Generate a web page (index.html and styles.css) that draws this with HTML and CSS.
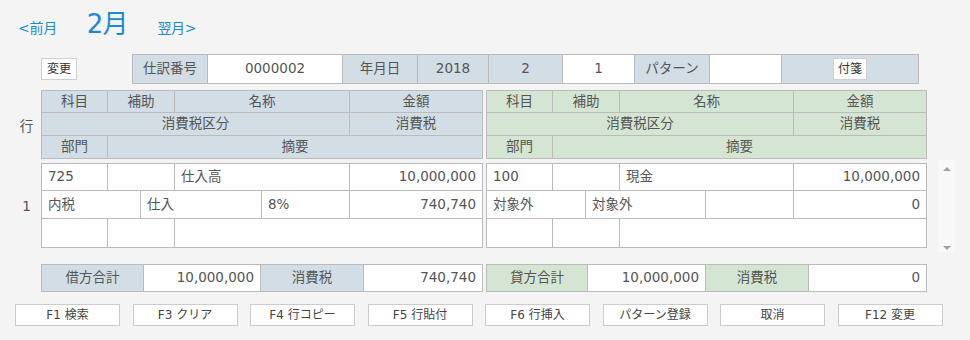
FILE: index.html
```html
<!DOCTYPE html>
<html lang="ja">
<head>
<meta charset="utf-8">
<title>仕訳入力</title>
<link rel="stylesheet" href="styles.css">
</head>
<body>
<div class="page">
  <div class="nav">
    <a class="nav-link prev">&lt;前月</a>
    <span class="month">2月</span>
    <a class="nav-link next">翌月&gt;</a>
  </div>

  <div class="topbar">
    <button class="mini-btn change">変更</button>
    <div class="info grid-bg">
      <div class="c lbl">仕訳番号</div>
      <div class="c wht">0000002</div>
      <div class="c lbl">年月日</div>
      <div class="c lbl">2018</div>
      <div class="c lbl">2</div>
      <div class="c wht">1</div>
      <div class="c lbl">パターン</div>
      <div class="c wht"></div>
      <div class="c lbl"><button class="mini-btn">付箋</button></div>
    </div>
  </div>

  <div class="section head-sec">
    <div class="rowlabel">行</div>
    <div class="tbl head left grid-bg">
      <div class="c h" style="grid-area:1/1/2/2">科目</div>
      <div class="c h" style="grid-area:1/2/2/4">補助</div>
      <div class="c h" style="grid-area:1/4/2/6">名称</div>
      <div class="c h" style="grid-area:1/6/2/7">金額</div>
      <div class="c h" style="grid-area:2/1/3/6">消費税区分</div>
      <div class="c h" style="grid-area:2/6/3/7">消費税</div>
      <div class="c h" style="grid-area:3/1/4/2">部門</div>
      <div class="c h" style="grid-area:3/2/4/7">摘要</div>
    </div>
    <div class="tbl head right grid-bg">
      <div class="c h" style="grid-area:1/1/2/2">科目</div>
      <div class="c h" style="grid-area:1/2/2/4">補助</div>
      <div class="c h" style="grid-area:1/4/2/6">名称</div>
      <div class="c h" style="grid-area:1/6/2/7">金額</div>
      <div class="c h" style="grid-area:2/1/3/6">消費税区分</div>
      <div class="c h" style="grid-area:2/6/3/7">消費税</div>
      <div class="c h" style="grid-area:3/1/4/2">部門</div>
      <div class="c h" style="grid-area:3/2/4/7">摘要</div>
    </div>
  </div>

  <div class="section data-sec">
    <div class="rowlabel">1</div>
    <div class="tbl data left grid-bg">
      <div class="c d" style="grid-area:1/1/2/2">725</div>
      <div class="c d" style="grid-area:1/2/2/4"></div>
      <div class="c d" style="grid-area:1/4/2/6">仕入高</div>
      <div class="c d num" style="grid-area:1/6/2/7">10,000,000</div>
      <div class="c d" style="grid-area:2/1/3/3">内税</div>
      <div class="c d" style="grid-area:2/3/3/5">仕入</div>
      <div class="c d" style="grid-area:2/5/3/6">8%</div>
      <div class="c d num" style="grid-area:2/6/3/7">740,740</div>
      <div class="c d" style="grid-area:3/1/4/2"></div>
      <div class="c d" style="grid-area:3/2/4/4"></div>
      <div class="c d" style="grid-area:3/4/4/7"></div>
    </div>
    <div class="tbl data right grid-bg">
      <div class="c d" style="grid-area:1/1/2/2">100</div>
      <div class="c d" style="grid-area:1/2/2/4"></div>
      <div class="c d" style="grid-area:1/4/2/6">現金</div>
      <div class="c d num" style="grid-area:1/6/2/7">10,000,000</div>
      <div class="c d" style="grid-area:2/1/3/3">対象外</div>
      <div class="c d" style="grid-area:2/3/3/5">対象外</div>
      <div class="c d" style="grid-area:2/5/3/6"></div>
      <div class="c d num" style="grid-area:2/6/3/7">0</div>
      <div class="c d" style="grid-area:3/1/4/2"></div>
      <div class="c d" style="grid-area:3/2/4/4"></div>
      <div class="c d" style="grid-area:3/4/4/7"></div>
    </div>
    <div class="scrollbar">
      <span class="arrow up"></span>
      <span class="arrow down"></span>
    </div>
  </div>

  <div class="section total-sec">
    <div class="rowlabel"></div>
    <div class="tbl total left grid-bg">
      <div class="c lbl">借方合計</div>
      <div class="c wht num">10,000,000</div>
      <div class="c lbl">消費税</div>
      <div class="c wht num">740,740</div>
    </div>
    <div class="tbl total right grid-bg">
      <div class="c lbl">貸方合計</div>
      <div class="c wht num">10,000,000</div>
      <div class="c lbl">消費税</div>
      <div class="c wht num">0</div>
    </div>
  </div>

  <div class="buttons">
    <button class="fbtn">F1 検索</button>
    <button class="fbtn">F3 クリア</button>
    <button class="fbtn">F4 行コピー</button>
    <button class="fbtn">F5 行貼付</button>
    <button class="fbtn">F6 行挿入</button>
    <button class="fbtn">パターン登録</button>
    <button class="fbtn">取消</button>
    <button class="fbtn">F12 変更</button>
  </div>
</div>
</body>
</html>
```

FILE: styles.css
```css
* { box-sizing: border-box; }
html, body {
  margin: 0;
  padding: 0;
  background: #f4f4f4;
  width: 970px;
  height: 340px;
  overflow: hidden;
}
body {
  font-family: "DejaVu Sans", "Noto Sans CJK JP", sans-serif;
  font-size: 13.5px;
  color: #555;
}
button { font-family: inherit; }

.nav {
  height: 54px;
  display: flex;
  align-items: baseline;
  padding-left: 18px;
  padding-top: 11px;
  line-height: 1;
}
.nav-link {
  color: #1e88d6;
  font-size: 14px;
  letter-spacing: -0.3px;
}
.month {
  color: #1e88d6;
  font-size: 26px;
  margin-left: 30px;
  margin-right: 30px;
  letter-spacing: -1px;
}

.grid-bg {
  background: #bbbbbb;
  padding: 1px;
  gap: 1px;
  display: grid;
}
.c {
  display: flex;
  align-items: center;
  justify-content: center;
  white-space: nowrap;
  overflow: hidden;
  line-height: 1;
}
.lbl { background: #d2dde6; }
.wht { background: #ffffff; }

.topbar {
  display: flex;
  align-items: center;
  padding-left: 41px;
  height: 30px;
}
.mini-btn {
  height: 22px;
  padding: 0 4px;
  background: #fff;
  border: 1px solid #cfcfcf;
  font-size: 12px;
  color: #333;
  line-height: 1;
}
.change { width: 36px; margin-right: 55px; padding: 0; }
.info {
  height: 30px;
  grid-template-columns: 74px 134px 74px 70px 73px 71px 74px 71px 136px;
}

.section {
  display: flex;
  align-items: flex-start;
}
.rowlabel {
  width: 41px;
  padding-left: 12px;
  display: flex;
  align-items: center;
  justify-content: center;
  align-self: stretch;
}
.tbl.right { margin-left: 3px; }

.head-sec { margin-top: 6px; }
.head {
  height: 69px;
  grid-template-rows: 21px 22px 22px;
}
.head.left { grid-template-columns: 65px 32px 33px 86px 87px 132px; }
.head.right { grid-template-columns: 65px 32px 33px 85px 87px 132px; }
.left.head .h { background: #d2dde6; }
.right.head .h { background: #d5e5d4; }

.data-sec { margin-top: 4px; height: 85px; }
.data { height: 85px; grid-template-rows: 26px 27px 28px; }
.data.left { grid-template-columns: 65px 32px 33px 86px 87px 132px; }
.data.right { grid-template-columns: 65px 32px 33px 85px 87px 132px; }
.d {
  background: #fff;
  justify-content: flex-start;
  padding: 0 6px;
}
.num { justify-content: flex-end; padding-right: 6px; }

.scrollbar {
  width: 17px;
  margin-left: 11px;
  margin-top: -3px;
  height: 92px;
  background: #f8f8f8;
  display: flex;
  flex-direction: column;
  justify-content: space-between;
  align-items: center;
  padding: 7px 0 2px;
}
.arrow {
  width: 0;
  height: 0;
  border-left: 4px solid transparent;
  border-right: 4px solid transparent;
}
.arrow.up { border-bottom: 4px solid #a3a3a3; }
.arrow.down { border-top: 4px solid #a3a3a3; }

.total-sec { margin-top: 16px; }
.total { height: 28px; }
.total.left { grid-template-columns: 101px 116px 102px 118px; }
.total.right { grid-template-columns: 100px 117px 102px 117px; }
.total.right .lbl { background: #d5e5d4; }

.buttons {
  margin-top: 12px;
  padding-left: 15px;
  display: grid;
  grid-template-columns: repeat(8, 105px);
  column-gap: 12.5px;
}
.fbtn {
  height: 22px;
  background: #fff;
  border: 1px solid #cccccc;
  font-size: 12px;
  color: #444;
  padding: 0;
  line-height: 1;
}
```
